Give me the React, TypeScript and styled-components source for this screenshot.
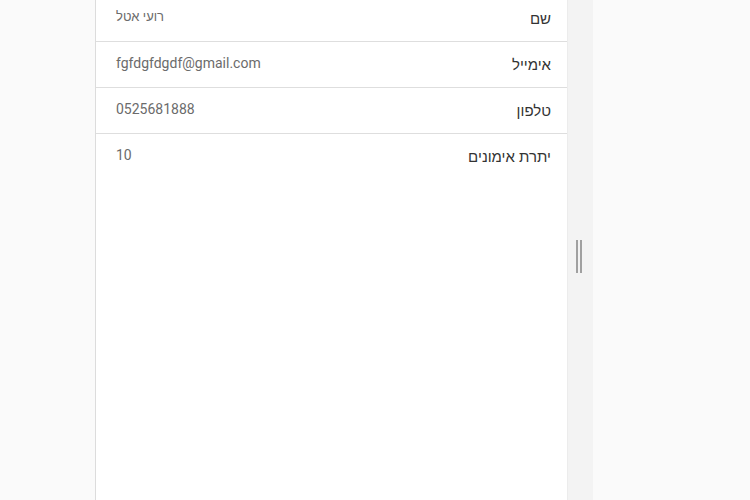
import styled, { createGlobalStyle } from "styled-components";

const GlobalStyle = createGlobalStyle`
  html, body {
    margin: 0;
    padding: 0;
    height: 100%;
    background: #fafafa;
    overflow: hidden;
  }
  #root {
    height: 100%;
  }
`;

const Page = styled.div`
  display: flex;
  height: 500px;
  padding-left: 95px;
  font-family: Roboto, "Liberation Sans", Arial, sans-serif;
`;

const Panel = styled.div`
  width: 471px;
  height: 100%;
  background: #ffffff;
  border-left: 1px solid #dcdcdc;
  border-right: 1px solid #ececec;
  overflow: hidden;
`;

const List = styled.div`
  display: flex;
  flex-direction: column;
  margin-top: -4px;
`;

const Row = styled.div`
  display: flex;
  direction: rtl;
  justify-content: space-between;
  align-items: flex-start;
  height: 45px;
  box-sizing: content-box;
  padding: 0 16px 0 20px;
  border-bottom: 1px solid #dedede;

  &:last-child {
    border-bottom: none;
  }
`;

const Label = styled.span`
  font-family: "Liberation Sans", Arial, sans-serif;
  font-size: 15px;
  color: #333333;
  line-height: 20px;
  margin-top: 13px;
`;

const Value = styled.span<{ $hebrew?: boolean }>`
  direction: ltr;
  font-size: ${(props) => (props.$hebrew ? "13px" : "14px")};
  color: #6b6b6b;
  line-height: 20px;
  margin-top: 11px;
`;

const Splitter = styled.div`
  width: 25px;
  height: 100%;
  background: #f3f3f3;
  display: flex;
  align-items: center;
  justify-content: center;
  padding-top: 12px;
  box-sizing: border-box;
`;

const Grip = styled.div`
  width: 2px;
  height: 33px;
  border-left: 2px solid #a0a0a0;
  border-right: 2px solid #a0a0a0;
  margin-left: -3px;
`;

const rows = [
  { label: "שם", value: "רועי אטל", hebrew: true },
  { label: "אימייל", value: "fgfdgfdgdf@gmail.com" },
  { label: "טלפון", value: "0525681888" },
  { label: "יתרת אימונים", value: "10" },
];

export default function App() {
  return (
    <>
      <GlobalStyle />
      <Page>
        <Panel>
          <List>
            {rows.map((r) => (
              <Row key={r.label}>
                <Label>{r.label}</Label>
                <Value $hebrew={r.hebrew}>{r.value}</Value>
              </Row>
            ))}
          </List>
        </Panel>
        <Splitter>
          <Grip />
        </Splitter>
      </Page>
    </>
  );
}
